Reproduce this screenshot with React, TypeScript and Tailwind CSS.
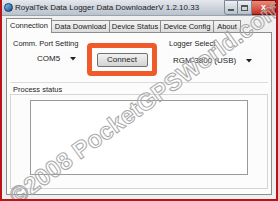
import React from 'react'

const TABS = [
  { label: 'Connection', w: 'w-[46px]' },
  { label: 'Data Download', w: 'w-[58px]' },
  { label: 'Device Status', w: 'w-[51px]' },
  { label: 'Device Config', w: 'w-[53px]' },
  { label: 'About', w: 'w-[27px]' },
]

function Combo({ value, className }: { value: string; className: string }) {
  return (
    <div className={`flex items-center justify-between bg-[#fbfbfb] px-[4px] text-[8px] text-[#222] ${className}`}>
      <span>{value}</span>
      <svg width="6" height="4" viewBox="0 0 6 4">
        <path d="M0 0 H6 L3 3.5 Z" fill="#222" />
      </svg>
    </div>
  )
}

export default function App() {
  return (
    <div
      className="relative w-[278px] h-[201px] overflow-hidden bg-[#f0f0f0] border-x-2 border-b-2 border-[#b8141a]"
      style={{ fontFamily: '"Liberation Sans", Arial, sans-serif' }}
    >
      {/* title bar */}
      <div className="flex h-[16px] items-center bg-gradient-to-b from-[#e4e8ee] to-[#b9c1cc] border-b border-[#9aa3ae]">
        <div className="ml-[2px] h-[9px] w-[9px] rounded-full bg-gradient-to-br from-[#7fc3ff] to-[#1a4f9a] border border-[#234]" />
        <span className="ml-[2px] text-[8px] text-[#1c1c1c] whitespace-nowrap">
          RoyalTek Data Logger Data DownloaderV 1.2.10.33
        </span>
        <div className="ml-auto flex h-[15px] self-start">
          <div className="flex w-[14px] items-end justify-center pb-[3px] border border-[#7d8794] bg-gradient-to-b from-[#eef1f5] to-[#b7c0cb] rounded-bl-[3px]">
            <div className="h-[2px] w-[6px] bg-[#555]" />
          </div>
          <div className="flex w-[14px] items-center justify-center border-y border-r border-[#7d8794] bg-gradient-to-b from-[#eef1f5] to-[#b7c0cb]">
            <div className="h-[6px] w-[7px] border border-[#555] border-t-2" />
          </div>
          <div className="flex w-[24px] items-center justify-center border-y border-r border-[#7a1010] bg-gradient-to-b from-[#e88a7a] to-[#c4291c] rounded-br-[3px]">
            <span className="text-[9px] font-bold text-white leading-none">x</span>
          </div>
        </div>
      </div>

      {/* tabs */}
      <div className="flex h-[16px] items-end pl-[4px] text-[7.5px] text-[#1c1c1c]">
        {TABS.map((t, i) =>
          i === 0 ? (
            <div key={t.label} className={`relative z-10 -mb-px flex h-[15px] items-center justify-center border border-b-0 border-[#8d8d8d] bg-[#fcfcfc] ${t.w}`}>
              {t.label}
            </div>
          ) : (
            <div key={t.label} className={`flex h-[12px] items-center justify-center border border-l-0 border-b-0 border-[#8d8d8d] bg-gradient-to-b from-[#f4f4f4] to-[#dcdcdc] ${t.w}`}>
              {t.label}
            </div>
          )
        )}
      </div>

      {/* panel */}
      <div className="mx-[4px] h-[163px] border border-[#8d8d8d] bg-[#fcfcfc] px-[3px] pt-[5px] text-[7.5px] text-[#1c1c1c]">
        <div className="flex h-[40px]">
          <div className="flex w-[78px] flex-col pl-[3px]">
            <span>Comm. Port Setting</span>
            <Combo value="COM5" className="ml-[20px] mt-[4px] h-[12px] w-[47px]" />
          </div>
          <div className="ml-[-1px] mt-[5px] flex h-[33px] w-[70px] items-center justify-center rounded-[4px] border-[5px] border-[#f05a2a]">
            <div className="flex h-[14px] w-[51px] items-center justify-center rounded-[2px] border border-[#707070] bg-gradient-to-b from-[#f2f2f2] to-[#d4d4d4] text-[8px]">
              Connect
            </div>
          </div>
          <div className="ml-[12px] flex flex-col">
            <span>Logger Select</span>
            <Combo value="RGM-3800 (USB)" className="mt-[5px] h-[13px] w-[87px]" />
          </div>
        </div>

        <div className="mt-[4px] border-t border-[#dcdcdc] pt-[1px]">
          <span className="ml-[3px]">Process status</span>
          <div className="mt-[-1px] h-[95px] border border-[#d5d5d5] px-[19px] pt-[5px]">
            <div className="h-[75px] border border-[#9a9a9a] bg-white" />
          </div>
        </div>
      </div>

      {/* watermark */}
      <div className="pointer-events-none absolute left-[-36px] top-[84px] w-[360px] -rotate-[36deg] text-center">
        <span
          className="whitespace-nowrap text-[24px] font-bold text-transparent"
          style={{ WebkitTextStroke: '1px #a8a8a8', fontFamily: '"Liberation Sans", Arial, sans-serif' }}
        >
          ©2008 PocketGPSWorld.com
        </span>
      </div>
    </div>
  )
}
